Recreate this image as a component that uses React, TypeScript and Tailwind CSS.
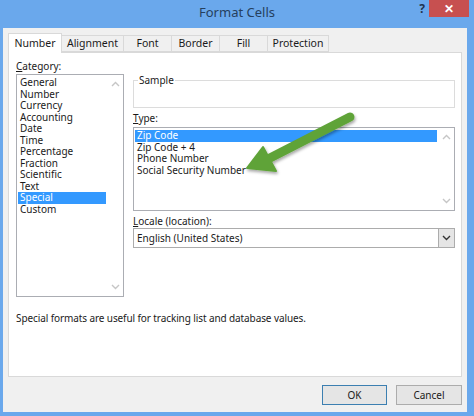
import React from "react"

const categories = [
  "General",
  "Number",
  "Currency",
  "Accounting",
  "Date",
  "Time",
  "Percentage",
  "Fraction",
  "Scientific",
  "Text",
  "Special",
  "Custom",
]

const types = ["Zip Code", "Zip Code + 4", "Phone Number", "Social Security Number"]

const tabs = [
  { label: "Alignment", w: "w-[62px]" },
  { label: "Font", w: "w-[48px]" },
  { label: "Border", w: "w-[48px]" },
  { label: "Fill", w: "w-[48px]" },
  { label: "Protection", w: "w-[61px]" },
]

function Chevron({ up, className }: { up?: boolean; className?: string }) {
  return (
    <svg width="9" height="6" viewBox="0 0 9 6" className={className}>
      <path
        d={up ? "M1 5 L4.5 1.5 L8 5" : "M1 1 L4.5 4.5 L8 1"}
        fill="none"
        stroke="currentColor"
        strokeWidth="1.4"
      />
    </svg>
  )
}

function Scrollbar() {
  return (
    <div className="w-[16px] flex flex-col items-center justify-between py-[6px] text-[#c6c6c6]">
      <Chevron up />
      <Chevron />
    </div>
  )
}

export default function App() {
  return (
    <div
      className="relative w-[474px] h-[416px] bg-[#6aa8ec] flex flex-col pl-[3px] pr-[7px] pb-[4px] text-[10px] text-[#1a1a1a]"
      style={{ fontFamily: '"Noto Sans", "Open Sans", sans-serif' }}
    >
      {/* title bar */}
      <div className="h-[28px] flex -ml-[3px] -mr-[7px]">
        <div className="w-[69px]" />
        <div className="flex-1 flex items-center justify-center text-[13px] text-[#25405e] pb-[2px]">
          Format Cells
        </div>
        <div className="w-[64px] mr-[5px] flex items-start">
          <div className="w-[24px] h-[17px] flex items-center justify-end pr-[4px] text-[12px] font-bold text-[#1f3550]">?</div>
          <div className="w-[40px] h-[17px] bg-[#c75050] flex items-center justify-center text-white text-[12px] font-bold">
            ✕
          </div>
        </div>
      </div>

      {/* body */}
      <div className="flex-1 bg-[#f0f0f0] px-[5px] pt-[5px] flex flex-col">
        {/* tabs */}
        <div className="h-[19px] flex items-end">
          <div className="w-[54px] h-[20px] -mb-px z-10 bg-white border border-b-0 border-[#d9d9d9] flex items-center justify-center text-[10.5px]">
            Number
          </div>
          {tabs.map((t) => (
            <div
              key={t.label}
              className={`${t.w} h-[17px] border border-l-0 border-[#d9d9d9] bg-[#f0f0f0] flex items-center justify-center text-[10.5px]`}
            >
              {t.label}
            </div>
          ))}
        </div>

        {/* panel */}
        <div className="h-[325px] bg-white border border-[#d9d9d9] pl-[7px] pt-[7px] flex flex-col">
          <div className="flex gap-[9px]">
            {/* category */}
            <div className="w-[108px] flex flex-col">
              <div className="h-[14px] leading-[12px]">
                <span className="underline">C</span>ategory:
              </div>
              <div className="h-[223px] border border-[#abadb3] flex">
                <div className="flex-1 pt-[2px] px-[1px]">
                  {categories.map((c) => (
                    <div
                      key={c}
                      className={`h-[11.5px] leading-[11.5px] pl-[2px] ${
                        c === "Special" ? "bg-[#3399ff] text-white" : ""
                      }`}
                    >
                      {c}
                    </div>
                  ))}
                </div>
                <Scrollbar />
              </div>
            </div>

            {/* right column */}
            <div className="w-[322px] flex flex-col">
              <fieldset className="mt-[14px] h-[34px] border border-[#dcdcdc] px-[4px]">
                <legend className="px-[1px] leading-[12px]">Sample</legend>
              </fieldset>

              <div className="mt-[4px] h-[15px] leading-[12px]">
                <span className="underline">T</span>ype:
              </div>
              <div className="h-[84px] border border-[#abadb3] flex">
                <div className="flex-1 pt-[2px] px-[1px]">
                  {types.map((t, i) => (
                    <div
                      key={t}
                      className={`h-[11.5px] leading-[11.5px] pl-[2px] ${
                        i === 0 ? "bg-[#3399ff] text-white" : ""
                      }`}
                    >
                      {t}
                    </div>
                  ))}
                </div>
                <Scrollbar />
              </div>

              <div className="mt-[4px] h-[13px] leading-[12px]">
                <span className="underline">L</span>ocale (location):
              </div>
              <div className="h-[20px] border border-[#acacac] flex">
                <div className="flex-1 flex items-center pl-[3px]">English (United States)</div>
                <div className="w-[16px] bg-[#e5e5e5] border-l border-[#acacac] flex items-center justify-center text-[#333]">
                  <Chevron />
                </div>
              </div>
            </div>
          </div>

          <div className="mt-[15px] leading-[12px] tracking-[-0.1px]">
            Special formats are useful for tracking list and database values.
          </div>
        </div>

        {/* buttons */}
        <div className="mt-[8px] flex justify-end gap-[9px]">
          <div className="w-[65px] h-[20px] bg-[#e5e5e5] border border-[#3c7fb1] flex items-center justify-center">
            OK
          </div>
          <div className="w-[66px] h-[20px] bg-[#e5e5e5] border border-[#acacac] flex items-center justify-center">
            Cancel
          </div>
        </div>
      </div>

      {/* green callout arrow */}
      <svg
        className="absolute left-[230px] top-[105px]"
        width="135"
        height="80"
        viewBox="0 0 135 80"
      >
        <defs>
          <filter id="sh" x="-20%" y="-20%" width="140%" height="150%">
            <feDropShadow dx="1" dy="2" stdDeviation="1.5" floodColor="#000" floodOpacity="0.35" />
          </filter>
        </defs>
        <g filter="url(#sh)">
          <line x1="120" y1="12" x2="40" y2="53" stroke="#5fa339" strokeWidth="9" strokeLinecap="round" />
          <polygon points="17,63 33,42 46,66" fill="#5fa339" stroke="#5fa339" strokeWidth="2" strokeLinejoin="round" />
        </g>
      </svg>
    </div>
  )
}
